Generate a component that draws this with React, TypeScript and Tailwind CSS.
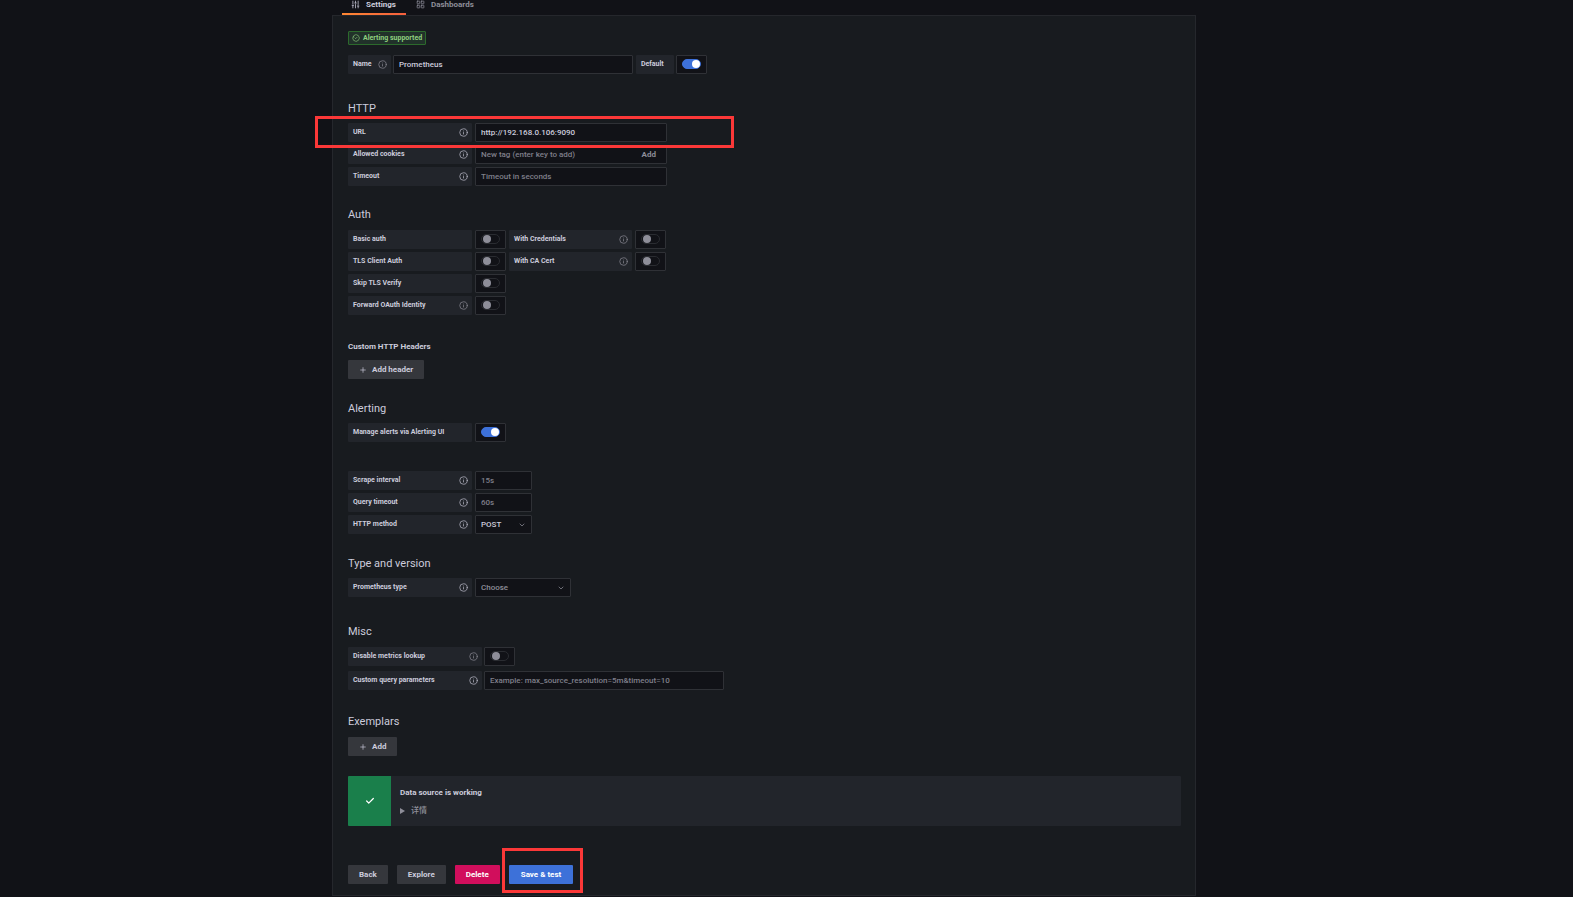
import { useState } from "react";
import type { ReactNode } from "react";
import { BadgeCheck, Check, ChevronDown, Info, LayoutGrid, Plus, SlidersVertical } from "lucide-react";

const inputClass =
  "h-[19px] rounded-[1px] border border-[#2f3136] bg-[#111217] px-[5px] text-[8px] leading-[17px] font-medium outline-none placeholder:text-[#7f7f8a] focus:border-[#3d71d9]";

type FieldLabelProps = {
  htmlFor: string;
  children: ReactNode;
  info?: "bright" | "dim";
  width?: string;
};

function FieldLabel({ htmlFor, children, info, width = "w-[124px]" }: FieldLabelProps) {
  return (
    <label
      className={[
        "flex h-[19px] shrink-0 items-center justify-between rounded-[1px] bg-[#22252b] pr-1 pl-[5px] text-[7px] leading-[9px] font-bold text-[#ccccdc]",
        width,
      ].join(" ")}
      htmlFor={htmlFor}
    >
      <span className="whitespace-nowrap">{children}</span>
      {info ? (
        <Info
          aria-hidden
          className={["size-[9px]", info === "dim" ? "text-[#85858f]" : "text-[#b4b4c2]"].join(" ")}
          strokeWidth={2}
        />
      ) : null}
    </label>
  );
}

function Switch({ id, defaultChecked = false }: { id: string; defaultChecked?: boolean }) {
  const [checked, setChecked] = useState(defaultChecked);

  return (
    <span className="flex h-[19px] w-[31px] shrink-0 justify-center rounded-[1px] border border-[#2f3136] bg-[#111217] pt-[3px]">
      <input
        checked={checked}
        className="h-[10px] w-[19px] cursor-pointer appearance-none rounded-full border border-[#2a2c31] bg-[#111217] before:ml-px before:block before:size-2 before:rounded-full before:bg-[#8e8e99] checked:border-[#3d71d9] checked:bg-[#3d71d9] checked:before:ml-[9px] checked:before:bg-white"
        id={id}
        onChange={(event) => setChecked(event.target.checked)}
        type="checkbox"
      />
    </span>
  );
}

type SelectProps = {
  id: string;
  width: string;
  tone: string;
  options: string[];
};

function Select({ id, width, tone, options }: SelectProps) {
  return (
    <span className={["relative block", width].join(" ")}>
      <select className={[inputClass, "block w-full appearance-none", tone].join(" ")} id={id}>
        {options.map((option) => (
          <option key={option}>{option}</option>
        ))}
      </select>
      <ChevronDown
        aria-hidden
        className="pointer-events-none absolute top-[6px] right-[6px] size-2 text-[#9a9aa6]"
      />
    </span>
  );
}

function Heading({ children }: { children: ReactNode }) {
  return <h3 className="pt-px text-[11px] leading-4 text-[#ccccdc]">{children}</h3>;
}

function Row({ children }: { children: ReactNode }) {
  return <div className="flex gap-[3px]">{children}</div>;
}

const BUTTON_TONES = {
  secondary: "bg-[#35373c] px-[11px] text-[#ccccdc] hover:bg-[#404247]",
  danger: "bg-[#d10e5c] px-[11px] text-white hover:bg-[#b80c51]",
  primary: "bg-[#3d71d9] px-3 text-white hover:bg-[#3563bf]",
};

type ButtonProps = {
  children: ReactNode;
  tone?: keyof typeof BUTTON_TONES;
  icon?: boolean;
};

function Button({ children, tone = "secondary", icon }: ButtonProps) {
  return (
    <button
      className={[
        "flex h-[19px] items-center gap-[5px] rounded-[1px] text-[8px] font-bold whitespace-nowrap",
        BUTTON_TONES[tone],
      ].join(" ")}
      type="button"
    >
      {icon ? <Plus aria-hidden className="size-2" strokeWidth={2} /> : null}
      {children}
    </button>
  );
}

export default function App() {
  return (
    <div className="min-h-screen bg-[#111217] pr-[45px] font-[Roboto,'Noto_Sans_CJK_SC',sans-serif] text-[#ccccdc]">
      <div className="mx-auto max-w-[864px]">
        <nav className="flex h-[15px] gap-[1px] pl-[10px] text-[8px] leading-[9px] font-bold">
          <a
            className="flex h-[15px] items-start gap-[6px] border-b-2 border-[#ff7a3c] pr-[10px] pl-[9px] [border-image:linear-gradient(90deg,#ff8833,#f55f3e)_1]"
            href="#settings"
          >
            <SlidersVertical aria-hidden className="size-[9px]" />
            Settings
          </a>
          <a className="flex items-start gap-[6px] px-[9px] text-[#8e8e99]" href="#dashboards">
            <LayoutGrid aria-hidden className="size-[9px]" />
            Dashboards
          </a>
        </nav>

        <main className="border border-[#25272c] bg-[#181b1f] pt-[15px] pr-[14px] pb-[11px] pl-[15px]">
          <div className="flex h-[14px] w-fit items-center gap-[3px] rounded-[1px] border border-[#2c6a2c] bg-[#21312a] px-[3px] text-[7px] font-bold text-[#8fd07f]">
            <BadgeCheck aria-hidden className="size-2" />
            Alerting supported
          </div>

          <div className="mt-[10px] flex gap-[2px]">
            <FieldLabel htmlFor="name" info="dim" width="w-[43px]">
              Name
            </FieldLabel>
            <input className={`${inputClass} mr-px w-[240px]`} defaultValue="Prometheus" id="name" />
            <FieldLabel htmlFor="default" width="w-[38px]">
              Default
            </FieldLabel>
            <Switch defaultChecked id="default" />
          </div>

          <section className="mt-[26px]">
            <Heading>HTTP</Heading>
            <div className="relative mt-[6px] flex flex-col gap-[3px]">
              <Row>
                <FieldLabel htmlFor="url" info="bright">
                  URL
                </FieldLabel>
                <input
                  className={`${inputClass} w-[192px]`}
                  defaultValue="http://192.168.0.106:9090"
                  id="url"
                />
              </Row>
              <Row>
                <FieldLabel htmlFor="cookies" info="bright">
                  Allowed cookies
                </FieldLabel>
                <div className={`${inputClass} flex w-[192px] items-center`}>
                  <input
                    className="min-w-0 flex-1 outline-none placeholder:text-[#7f7f8a]"
                    id="cookies"
                    placeholder="New tag (enter key to add)"
                  />
                  <button className="px-[5px] font-bold text-[#8e8e99]" type="button">
                    Add
                  </button>
                </div>
              </Row>
              <Row>
                <FieldLabel htmlFor="timeout" info="bright">
                  Timeout
                </FieldLabel>
                <input
                  className={`${inputClass} w-[192px]`}
                  id="timeout"
                  placeholder="Timeout in seconds"
                />
              </Row>
              <div className="pointer-events-none absolute -top-[7px] -left-[33px] h-[32px] w-[419px] border-3 border-[#fb3838]" />
            </div>
          </section>

          <section className="mt-5">
            <Heading>Auth</Heading>
            <div className="mt-[7px] flex flex-col gap-[3px]">
              <Row>
                <FieldLabel htmlFor="basic-auth">Basic auth</FieldLabel>
                <Switch id="basic-auth" />
                <FieldLabel htmlFor="with-credentials" info="dim" width="w-[123px]">
                  With Credentials
                </FieldLabel>
                <Switch id="with-credentials" />
              </Row>
              <Row>
                <FieldLabel htmlFor="tls-client">TLS Client Auth</FieldLabel>
                <Switch id="tls-client" />
                <FieldLabel htmlFor="ca-cert" info="dim" width="w-[123px]">
                  With CA Cert
                </FieldLabel>
                <Switch id="ca-cert" />
              </Row>
              <Row>
                <FieldLabel htmlFor="skip-tls">Skip TLS Verify</FieldLabel>
                <Switch id="skip-tls" />
              </Row>
              <Row>
                <FieldLabel htmlFor="forward-oauth" info="dim">
                  Forward OAuth Identity
                </FieldLabel>
                <Switch id="forward-oauth" />
              </Row>
            </div>
          </section>

          <section className="mt-[23px]">
            <h4 className="mb-[5px] pt-px text-[8px] leading-4 font-bold">Custom HTTP Headers</h4>
            <Button icon>Add header</Button>
          </section>

          <section className="mt-[21px]">
            <Heading>Alerting</Heading>
            <div className="mt-[6px] flex gap-[3px]">
              <FieldLabel htmlFor="manage-alerts">Manage alerts via Alerting UI</FieldLabel>
              <Switch defaultChecked id="manage-alerts" />
            </div>
          </section>

          <section className="mt-[29px] flex flex-col gap-[3px]">
            <Row>
              <FieldLabel htmlFor="scrape" info="bright">
                Scrape interval
              </FieldLabel>
              <input className={`${inputClass} w-[57px]`} id="scrape" placeholder="15s" />
            </Row>
            <Row>
              <FieldLabel htmlFor="query-timeout" info="bright">
                Query timeout
              </FieldLabel>
              <input className={`${inputClass} w-[57px]`} id="query-timeout" placeholder="60s" />
            </Row>
            <Row>
              <FieldLabel htmlFor="method" info="bright">
                HTTP method
              </FieldLabel>
              <Select id="method" options={["POST", "GET"]} tone="text-[#ccccdc]" width="w-[57px]" />
            </Row>
          </section>

          <section className="mt-[21px]">
            <Heading>Type and version</Heading>
            <div className="mt-[6px] flex gap-[3px]">
              <FieldLabel htmlFor="prometheus-type" info="bright">
                Prometheus type
              </FieldLabel>
              <Select
                id="prometheus-type"
                options={["Choose", "Prometheus", "Cortex", "Mimir", "Thanos"]}
                tone="text-[#8e8e99]"
                width="w-[96px]"
              />
            </div>
          </section>

          <section className="mt-[26px]">
            <Heading>Misc</Heading>
            <div className="mt-[7px] flex flex-col gap-[5px]">
              <div className="flex gap-[2px]">
                <FieldLabel htmlFor="metrics-lookup" info="dim" width="w-[134px]">
                  Disable metrics lookup
                </FieldLabel>
                <Switch id="metrics-lookup" />
              </div>
              <div className="flex gap-[2px]">
                <FieldLabel htmlFor="query-params" info="bright" width="w-[134px]">
                  Custom query parameters
                </FieldLabel>
                <input
                  className={`${inputClass} w-[240px]`}
                  id="query-params"
                  placeholder="Example: max_source_resolution=5m&timeout=10"
                />
              </div>
            </div>
          </section>

          <section className="mt-[23px]">
            <Heading>Exemplars</Heading>
            <div className="mt-[7px]">
              <Button icon>Add</Button>
            </div>
          </section>

          <div className="mt-5 flex min-h-[50px] overflow-hidden rounded-[1px] bg-[#22252b]" role="status">
            <div className="flex w-[43px] items-center justify-center bg-[#1a7f4b] text-white">
              <Check aria-hidden className="size-[10px]" strokeWidth={3} />
            </div>
            <div className="px-[9px] pt-[11px] text-[8px]">
              <p className="leading-3 font-bold">Data source is working</p>
              <details className="mt-[6px] leading-3 font-medium text-[#8e8e99]">
                <summary className="flex cursor-pointer items-center gap-[6px]">
                  <svg aria-hidden className="h-[6px] w-[5px]" viewBox="0 0 5 6">
                    <path d="M0 0L5 3L0 6Z" fill="currentColor" />
                  </svg>
                  详情
                </summary>
              </details>
            </div>
          </div>

          <div className="mt-[39px] flex gap-[9px]">
            <Button>Back</Button>
            <Button>Explore</Button>
            <Button tone="danger">Delete</Button>
            <div className="relative">
              <Button tone="primary">Save &amp; test</Button>
              <div className="pointer-events-none absolute -top-[17px] -right-[10px] -bottom-[9px] -left-[7px] border-3 border-[#fb3838]" />
            </div>
          </div>
        </main>
      </div>
    </div>
  );
}
